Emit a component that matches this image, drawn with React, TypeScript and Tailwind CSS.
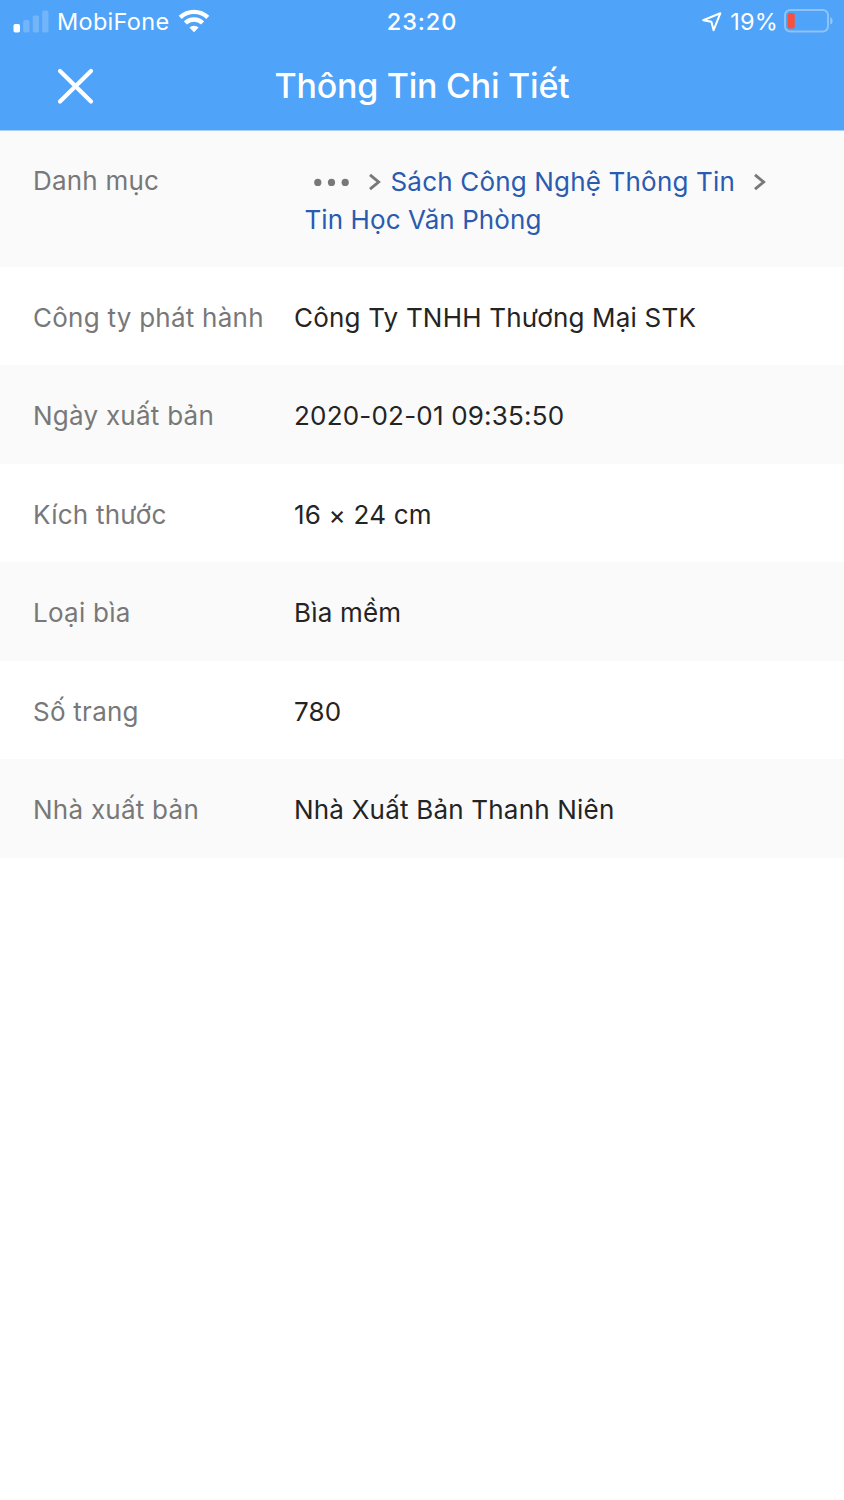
import { clsx } from 'clsx';

interface DetailRow {
    label: string;
    value: string;
}

const rows: DetailRow[] = [
    { label: 'Công ty phát hành', value: 'Công Ty TNHH Thương Mại STK' },
    { label: 'Ngày xuất bản', value: '2020-02-01 09:35:50' },
    { label: 'Kích thước', value: '16 × 24 cm' },
    { label: 'Loại bìa', value: 'Bìa mềm' },
    { label: 'Số trang', value: '780' },
    { label: 'Nhà xuất bản', value: 'Nhà Xuất Bản Thanh Niên' },
];

function SignalIcon() {
    return (
        <svg width="36" height="24" viewBox="0 0 36 24" fill="white">
            <rect x="0.5" y="14" width="6.5" height="8.5" rx="1.8" />
            <g opacity="0.2">
                <rect x="10.2" y="10" width="6.3" height="12.5" rx="1.8" />
                <rect x="19.7" y="5.5" width="6.3" height="17" rx="1.8" />
                <rect x="29.2" y="0.5" width="6.3" height="22" rx="1.8" />
            </g>
        </svg>
    );
}

function WifiIcon() {
    return (
        <svg width="32" height="24" viewBox="0 0 32 24" fill="none" stroke="white" strokeWidth="4.4">
            <path d="M2.2 8.4a20 20 0 0 1 27.6 0" />
            <path d="M7.4 14a12.4 12.4 0 0 1 17.2 0" />
            <path d="M16 23.2l-4.6-4.7a6.8 6.8 0 0 1 9.2 0z" fill="white" stroke="none" />
        </svg>
    );
}

function LocationIcon() {
    return (
        <svg width="20" height="20" viewBox="0 0 20 20" fill="none" stroke="white" strokeWidth="2" strokeLinejoin="round">
            <path d="M1.2 8.2L18.3 1.3L11.6 18.2L9.4 9.7z" />
        </svg>
    );
}

function BatteryIcon() {
    return (
        <svg width="50" height="24" viewBox="0 0 50 24" fill="none">
            <rect x="1" y="1" width="43" height="21.5" rx="5.2" stroke="white" strokeOpacity="0.35" strokeWidth="2" />
            <rect x="3.7" y="4" width="7" height="15.5" rx="2" fill="#f94f3b" />
            <path d="M46.3 8.2c3 .9 3 6.5 0 7.4z" fill="white" fillOpacity="0.4" />
        </svg>
    );
}

function Chevron() {
    return (
        <svg width="12" height="18" viewBox="0 0 12 18" fill="none" stroke="#787878" strokeWidth="2.9">
            <path d="M1 1.8l8.6 7.2L1 16.2" />
        </svg>
    );
}

function StatusBar() {
    return (
        <div className="grid h-[43px] grid-cols-[1fr_auto_1fr] items-center pr-[10px] pl-[13px] text-[23.5px] leading-none">
            <div className="flex items-center">
                <SignalIcon />
                <span className="ml-2 tracking-[0.3px]">MobiFone</span>
                <span className="ml-[9px] -mt-0.5"><WifiIcon /></span>
            </div>
            <span className="mr-[3px] font-medium tracking-[0.9px]">23:20</span>
            <div className="flex items-center justify-end">
                <LocationIcon />
                <span className="ml-2 tracking-[0.2px]">19%</span>
                <span className="ml-1.5 -mt-0.5"><BatteryIcon /></span>
            </div>
        </div>
    );
}

function Header() {
    return (
        <header className="h-[131px] border-b border-[#a6cffb] bg-[#4fa3f8] text-white">
            <StatusBar />
            <div className="grid h-[86px] grid-cols-[1fr_auto_1fr] items-center">
                <button className="ml-[57px] w-[37px]" aria-label="Đóng">
                    <svg width="37" height="37" viewBox="0 0 37 37" fill="none" stroke="white" strokeWidth="4.2" strokeLinecap="round">
                        <path d="M3 3L34 33.5M34 3L3 33.5" />
                    </svg>
                </button>
                <h1 className="text-[34px] leading-none font-medium tracking-[-0.25px]">Thông Tin Chi Tiết</h1>
            </div>
        </header>
    );
}

export default function App() {
    return (
        <div className="min-h-[1500px] w-[844px] bg-white font-['Inter',sans-serif] text-[26px] text-[#242424]">
            <Header />
            <main>
                <section className="flex h-[135.7px] bg-[#fafafa] pt-8 leading-[38px]">
                    <div className="-mt-px w-[304.5px] pl-[33px] tracking-[0.2px] text-[#787878]">Danh mục</div>
                    <div className="text-[#2a5bb0]">
                        <div className="flex items-center">
                            <svg className="ml-[9px]" width="36" height="8" viewBox="0 0 36 8" fill="#787878">
                                <circle cx="3.8" cy="4.4" r="3.6" />
                                <circle cx="17.5" cy="4.4" r="3.6" />
                                <circle cx="31.2" cy="4.4" r="3.6" />
                            </svg>
                            <span className="mr-[10px] ml-[19px]"><Chevron /></span>
                            <span className="tracking-[0.18px]">Sách Công Nghệ Thông Tin</span>
                            <span className="ml-[19px]"><Chevron /></span>
                        </div>
                        <div className="tracking-[0.08px]">Tin Học Văn Phòng</div>
                    </div>
                </section>
                {rows.map((row, i) => (
                    <section
                        key={row.label}
                        className={clsx('flex h-[98.5px] items-center pt-[2.3px]', i % 2 === 0 ? 'bg-white' : 'bg-[#fafafa]')}
                    >
                        <div className="w-[294px] pl-[33px] tracking-[0.25px] whitespace-nowrap text-[#787878]">{row.label}</div>
                        <div className="tracking-[0.2px]">{row.value}</div>
                    </section>
                ))}
            </main>
        </div>
    );
}
